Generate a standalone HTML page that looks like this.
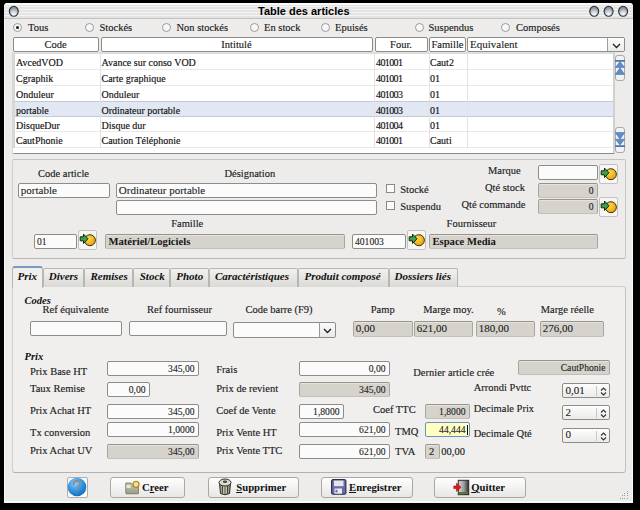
<!DOCTYPE html><html><head><meta charset="utf-8"><style>
*{box-sizing:border-box;margin:0;padding:0}
html,body{width:640px;height:510px;background:#000;overflow:hidden;position:relative;font-family:"Liberation Serif",serif;font-size:10px;color:#1a1a1a}
div,span{position:absolute;white-space:nowrap}
span{line-height:14px}
.m{font-size:10.5px;color:#1c1c24;-webkit-text-stroke:0.15px #1c1c24}
.t{font-size:10px;color:#111;-webkit-text-stroke:0.15px #111}
.b{font-size:10.6px;font-weight:bold;color:#151515}
.bt{font-size:10.7px;font-weight:bold;color:#111}
.it2{font-size:10.5px;font-weight:bold;font-style:italic;color:#111}
.it{font-size:11px;font-weight:bold;font-style:italic;color:#111}
.in{font-size:11px;color:#222;-webkit-text-stroke:0.1px #222}
.hd{font-size:10.5px;color:#222;-webkit-text-stroke:0.15px #222}
#win{left:4px;top:3px;width:629px;height:500px;background:#edecea;border-radius:4px 4px 0 0;border-left:1px solid #fafafa;border-right:1px solid #fafafa;border-bottom:2px solid #f8f8f8}
#tb{left:4px;top:3px;width:629px;height:16px;border-radius:4px 4px 0 0;background:linear-gradient(#fbfbfb 0 2px,transparent 2px),repeating-linear-gradient(#f3f3f3 0 1.5px,#e4e4e4 1.5px 3px);border-bottom:1px solid #c2c2c2}
.wb{top:6px;width:10px;height:11px;border-radius:50%;background:radial-gradient(ellipse at 50% 80%,#ffffff 0,#dfe3ea 35%,#9aa0aa 80%,#50545c 100%);box-shadow:0 0 0 0.6px #3a3e44}
.radio{width:9px;height:9px;border-radius:50%;border:1px solid #9a9a9a;background:#f8f8f8}
.radio.on::after{content:"";position:absolute;left:2px;top:2px;width:3px;height:3px;border-radius:50%;background:#1a1a1a}
.chk{width:9px;height:9px;border:1px solid #8a8a8a;background:#fbfbfb}
.hdr{top:37px;height:15px;background:#fff;border:1px solid #8e8c88;border-radius:2px}
.tbl{left:12px;top:52px;width:603px;height:102px;background:#fff;border-left:3px solid #d8d8d6;border-right:2px solid #d0d0ce;border-top:2px solid #dedede;border-bottom:1px solid #8c8a86}
.row{left:15px;width:598px;border-bottom:1px solid #e9e9e9}
.vl{top:54px;width:1px;height:94px;background:#e2e2e2}
.sb{left:615px;width:10px;height:26px;border:1px solid #a8a8a8;border-radius:3px;background:#f2f2f2}
.grp{border:1px solid #c9c7c3;border-radius:3px}
.inp{height:15px;background:#fbfbfb;border:1px solid #8e8c88;border-radius:2px}
.ro{background:#d6d2cc;border-color:#96928c #a8a49e #c2c0bc #a8a49e;box-shadow:inset 0 1px 0 #e6e3de}
.ib{width:19px;height:20px;border:1px solid #c4c2be;border-radius:2px;background:#f6f6f5}
.tab{top:268px;height:19px;border:1px solid #b8b6b2;border-bottom:none;border-radius:2px 2px 0 0;background:linear-gradient(#f2f1ef,#dcdad7)}
.btn{top:477px;height:21px;border:1px solid #aaa8a4;border-radius:3px;background:linear-gradient(#fefefe,#e8e7e5)}
.spin{height:15px;background:linear-gradient(#fdfdfd,#ecebea);border:1px solid #8e8c88;border-radius:2px}
</style></head><body>
<div id="win"></div><div id="tb"></div>
<span style="left:258px;top:5px;font-family:'Liberation Sans',sans-serif;font-weight:bold;font-size:11px;line-height:12px;color:#000">Table des articles</span>
<svg style="position:absolute;left:0;top:0" width="640" height="24"><defs><radialGradient id="wbg" cx="0.5" cy="0.8" r="0.8" fx="0.5" fy="0.9"><stop offset="0" stop-color="#ffffff"/><stop offset="0.4" stop-color="#d4dae2"/><stop offset="1" stop-color="#6e7580"/></radialGradient></defs><ellipse cx="13.8" cy="11.3" rx="4.5" ry="5.0" fill="url(#wbg)" stroke="#2e3238" stroke-width="1.1"/><ellipse cx="594.2" cy="11.3" rx="4.5" ry="5.0" fill="url(#wbg)" stroke="#2e3238" stroke-width="1.1"/><ellipse cx="608.6" cy="11.3" rx="4.5" ry="5.0" fill="url(#wbg)" stroke="#2e3238" stroke-width="1.1"/><ellipse cx="623.1" cy="11.3" rx="4.5" ry="5.0" fill="url(#wbg)" stroke="#2e3238" stroke-width="1.1"/></svg>
<div class="radio on" style="left:13px;top:23px"></div>
<span class="m" style="left:28px;top:20.96px;">Tous</span>
<div class="radio" style="left:85px;top:23px"></div>
<span class="m" style="left:99.5px;top:20.96px;">Stockés</span>
<div class="radio" style="left:162px;top:23px"></div>
<span class="m" style="left:176.5px;top:20.96px;">Non stockés</span>
<div class="radio" style="left:250px;top:23px"></div>
<span class="m" style="left:264px;top:20.96px;">En stock</span>
<div class="radio" style="left:321px;top:23px"></div>
<span class="m" style="left:335px;top:20.96px;">Epuisés</span>
<div class="radio" style="left:415px;top:23px"></div>
<span class="m" style="left:428.5px;top:20.96px;">Suspendus</span>
<div class="radio" style="left:501px;top:23px"></div>
<span class="m" style="left:516px;top:20.96px;">Composés</span>
<div class="hdr" style="left:12.5px;width:86px"></div>
<span class="hd" style="left:12.5px;width:86px;top:37.5px;text-align:center">Code</span>
<div class="hdr" style="left:100.5px;width:272px"></div>
<span class="hd" style="left:100.5px;width:272px;top:37.5px;text-align:center">Intitulé</span>
<div class="hdr" style="left:374.5px;width:53px"></div>
<span class="hd" style="left:374.5px;width:53px;top:37.5px;text-align:center">Four.</span>
<div class="hdr" style="left:429px;width:37px"></div>
<span class="hd" style="left:429px;width:37px;top:37.5px;text-align:center">Famille</span>
<div class="hdr" style="left:467px;width:158px"><div style="left:139px;top:0;width:17px;height:13px;background:linear-gradient(#fdfdfd,#ebebea);border-left:1px solid #a09e9a;border-radius:0 2px 2px 0"></div><svg style="position:absolute;left:144px;top:4.5px" width="9" height="6"><path d="M1 1 L4.5 4.5 L8 1" stroke="#222" stroke-width="1.3" fill="none"/></svg></div>
<span class="in" style="left:470px;top:37.09px;">Equivalent</span>
<div class="tbl"></div>
<div class="row" style="top:54px;height:16px;"></div>
<span class="t" style="left:16px;top:56.22px;">AvcedVOD</span>
<span class="t" style="left:101.5px;top:56.22px;">Avance sur conso VOD</span>
<span class="t" style="left:376px;top:56.22px;letter-spacing:-0.6px">401001</span>
<span class="t" style="left:430px;top:56.22px;">Caut2</span>
<div class="row" style="top:70px;height:16px;"></div>
<span class="t" style="left:16px;top:72.22px;">Cgraphik</span>
<span class="t" style="left:101.5px;top:72.22px;">Carte graphique</span>
<span class="t" style="left:376px;top:72.22px;letter-spacing:-0.6px">401001</span>
<span class="t" style="left:430px;top:72.22px;">01</span>
<div class="row" style="top:86px;height:16px;border-bottom-color:#c4c9d2;"></div>
<span class="t" style="left:16px;top:88.22px;">Onduleur</span>
<span class="t" style="left:101.5px;top:88.22px;">Onduleur</span>
<span class="t" style="left:376px;top:88.22px;letter-spacing:-0.6px">401003</span>
<span class="t" style="left:430px;top:88.22px;">01</span>
<div class="row" style="top:102px;height:15px;background:#e1e8f4;border-bottom-color:#c4c9d2;"></div>
<span class="t" style="left:16px;top:104.22px;">portable</span>
<span class="t" style="left:101.5px;top:104.22px;">Ordinateur portable</span>
<span class="t" style="left:376px;top:104.22px;letter-spacing:-0.6px">401003</span>
<span class="t" style="left:430px;top:104.22px;">01</span>
<div class="row" style="top:117px;height:15px;"></div>
<span class="t" style="left:16px;top:119.23px;">DisqueDur</span>
<span class="t" style="left:101.5px;top:119.23px;">Disque dur</span>
<span class="t" style="left:376px;top:119.23px;letter-spacing:-0.6px">401004</span>
<span class="t" style="left:430px;top:119.23px;">01</span>
<div class="row" style="top:132px;height:16px;"></div>
<span class="t" style="left:16px;top:134.23px;">CautPhonie</span>
<span class="t" style="left:101.5px;top:134.23px;">Caution Téléphonie</span>
<span class="t" style="left:376px;top:134.23px;letter-spacing:-0.6px">401001</span>
<span class="t" style="left:430px;top:134.23px;">Cauti</span>
<div class="vl" style="left:100px"></div>
<div class="vl" style="left:374px"></div>
<div class="vl" style="left:429px"></div>
<div class="vl" style="left:467px"></div>
<div class="sb" style="top:54.5px"><svg style="position:absolute;left:-1px;top:3.5px" width="10" height="17"><rect x="0" y="1" width="10" height="1.8" fill="#4a78b8"/><path d="M0.3 8.5 L5 2.6 L9.7 8.5 Z M0.3 15.5 L5 8.8 L9.7 15.5 Z" fill="#5e8ccc" stroke="#3a68a8" stroke-width="0.5"/></svg></div>
<div class="sb" style="top:126.5px"><svg style="position:absolute;left:-1px;top:3.5px" width="10" height="17"><path d="M0.3 1.5 L5 8.2 L9.7 1.5 Z M0.3 8.2 L5 14 L9.7 8.2 Z" fill="#5e8ccc" stroke="#3a68a8" stroke-width="0.5"/><rect x="0" y="14.2" width="10" height="1.8" fill="#4a78b8"/></svg></div>
<div class="grp" style="left:11.5px;top:159px;width:614.5px;height:100px;border-radius:2px;border-color:#c6c4c0 #c8c6c2 #b8b6b2 #d0cecb"></div>
<div style="left:13px;top:148px;width:3px;height:5px;background:#fff"></div>
<span class="m" style="left:38px;top:167.06px;">Code article</span>
<div class="inp" style="left:18px;top:183px;width:92px;height:15px;"></div>
<span class="in" style="left:20.8px;top:183.29px;">portable</span>
<span class="m" style="left:224.4px;top:167.06px;">Désignation</span>
<div class="inp" style="left:116px;top:183px;width:261px;height:15px;"></div>
<span class="in" style="left:118.8px;top:183.29px;">Ordinateur portable</span>
<div class="inp" style="left:116px;top:200px;width:261px;height:15px;"></div>
<span class="m" style="left:171.2px;top:216.56px;">Famille</span>
<div class="inp" style="left:34px;top:234px;width:43px;height:15px;"></div>
<span class="in" style="left:37px;font-size:9.6px;top:235.36px">01</span>
<div class="ib" style="left:78px;top:230px"><svg style="position:absolute;left:-1px;top:0px" width="18" height="17"><defs><radialGradient id="og" cx="0.4" cy="0.35" r="0.75"><stop offset="0" stop-color="#ffd84a"/><stop offset="1" stop-color="#e89a00"/></radialGradient></defs><circle cx="11.9" cy="9.2" r="5.5" fill="url(#og)" stroke="#2a2000" stroke-width="0.9"/><path d="M2.2 5.8 H5.5 V3.1 L10 7.8 L5.5 12.5 V9.8 H2.2 Z" fill="#3ea04a" stroke="#0e2a10" stroke-width="1"/></svg></div>
<div class="inp ro" style="left:105px;top:234px;width:240px;height:15px;"></div>
<span class="b" style="left:108.5px;top:234.82px;">Matériel/Logiciels</span>
<div class="chk" style="left:386px;top:184px"></div>
<span class="m" style="left:400.2px;top:182.76px;">Stocké</span>
<div class="chk" style="left:386px;top:201px"></div>
<span class="m" style="left:400.2px;top:199.76px;">Suspendu</span>
<span class="m" style="left:488px;top:164.26px;">Marque</span>
<span class="m" style="left:485px;top:180.76px;">Qté stock</span>
<span class="m" style="left:461.5px;top:197.56px;">Qté commande</span>
<div class="inp" style="left:538px;top:165px;width:60px;height:15px;"></div>
<div class="ib" style="left:599px;top:164px"><svg style="position:absolute;left:-1px;top:0px" width="18" height="17"><defs><radialGradient id="og" cx="0.4" cy="0.35" r="0.75"><stop offset="0" stop-color="#ffd84a"/><stop offset="1" stop-color="#e89a00"/></radialGradient></defs><circle cx="11.9" cy="9.2" r="5.5" fill="url(#og)" stroke="#2a2000" stroke-width="0.9"/><path d="M2.2 5.8 H5.5 V3.1 L10 7.8 L5.5 12.5 V9.8 H2.2 Z" fill="#3ea04a" stroke="#0e2a10" stroke-width="1"/></svg></div>
<div class="inp ro" style="left:538px;top:183px;width:60px;height:15px;"></div>
<span class="in" style="left:538px;width:55.5px;text-align:right;font-size:9.6px;top:184.36px">0</span>
<div class="inp ro" style="left:538px;top:199px;width:60px;height:15px;"></div>
<span class="in" style="left:538px;width:55.5px;text-align:right;font-size:9.6px;top:200.36px">0</span>
<div class="ib" style="left:599px;top:197px"><svg style="position:absolute;left:-1px;top:0px" width="18" height="17"><defs><radialGradient id="og" cx="0.4" cy="0.35" r="0.75"><stop offset="0" stop-color="#ffd84a"/><stop offset="1" stop-color="#e89a00"/></radialGradient></defs><circle cx="11.9" cy="9.2" r="5.5" fill="url(#og)" stroke="#2a2000" stroke-width="0.9"/><path d="M2.2 5.8 H5.5 V3.1 L10 7.8 L5.5 12.5 V9.8 H2.2 Z" fill="#3ea04a" stroke="#0e2a10" stroke-width="1"/></svg></div>
<span class="m" style="left:446.6px;top:216.56px;">Fournisseur</span>
<div class="inp" style="left:352px;top:234px;width:54px;height:15px;"></div>
<span class="in" style="left:355px;font-size:9.6px;top:235.36px">401003</span>
<div class="ib" style="left:407px;top:230px"><svg style="position:absolute;left:-1px;top:0px" width="18" height="17"><defs><radialGradient id="og" cx="0.4" cy="0.35" r="0.75"><stop offset="0" stop-color="#ffd84a"/><stop offset="1" stop-color="#e89a00"/></radialGradient></defs><circle cx="11.9" cy="9.2" r="5.5" fill="url(#og)" stroke="#2a2000" stroke-width="0.9"/><path d="M2.2 5.8 H5.5 V3.1 L10 7.8 L5.5 12.5 V9.8 H2.2 Z" fill="#3ea04a" stroke="#0e2a10" stroke-width="1"/></svg></div>
<div class="inp ro" style="left:429px;top:234px;width:169px;height:15px;"></div>
<span class="b" style="left:432.5px;top:234.82px;">Espace Media</span>
<div class="grp" style="left:11.5px;top:286px;width:614.5px;height:187px;border-radius:0 3px 3px 3px;background:#f0efed;border-color:#cfcdc9 #c4c2be #b4b2ae #d2d0cc"></div>
<div class="tab" style="left:12px;width:30.5px;top:265.5px;height:22px;background:#f0efed;border-top:2px solid #7898c8;border-color:#7898c8 #b8b6b2 transparent #b8b6b2;border-radius:3px 3px 0 0"></div>
<span class="it" style="left:17.5px;top:269.09px;">Prix</span>
<div class="tab" style="left:42.5px;width:41.75px"></div>
<span class="it" style="left:48.75px;top:269.09px;">Divers</span>
<div class="tab" style="left:84.25px;width:48.75px"></div>
<span class="it" style="left:90.5px;top:269.09px;">Remises</span>
<div class="tab" style="left:133px;width:37px"></div>
<span class="it" style="left:139.75px;top:269.09px;">Stock</span>
<div class="tab" style="left:170px;width:38.75px"></div>
<span class="it" style="left:176.25px;top:269.09px;">Photo</span>
<div class="tab" style="left:208.75px;width:89.5px"></div>
<span class="it" style="left:215px;top:269.09px;">Caractéristiques</span>
<div class="tab" style="left:298.25px;width:90.5px"></div>
<span class="it" style="left:304.5px;top:269.09px;">Produit composé</span>
<div class="tab" style="left:388.75px;width:69.25px"></div>
<span class="it" style="left:394.5px;top:269.09px;">Dossiers liés</span>
<span class="it2" style="left:24.5px;top:294.01px;">Codes</span>
<span class="m" style="left:42.5px;top:303.26px;">Ref équivalente</span>
<span class="m" style="left:147px;top:303.26px;">Ref fournisseur</span>
<span class="m" style="left:245.5px;top:303.26px;">Code barre (F9)</span>
<span class="m" style="left:370.75px;top:303.26px;">Pamp</span>
<span class="m" style="left:423.25px;top:303.26px;">Marge moy.</span>
<span class="m" style="left:497px;top:304.76px;">%</span>
<span class="m" style="left:540.75px;top:303.26px;">Marge réelle</span>
<div class="inp" style="left:30px;top:321px;width:92px;height:15px;"></div>
<div class="inp" style="left:129px;top:321px;width:98px;height:15px;"></div>
<div class="inp" style="left:233px;top:321.5px;width:103px;height:16px"><div style="left:85px;top:-1px;width:1px;height:16px;background:#9a9894"></div><div style="left:86px;top:0;width:15px;height:14px;background:linear-gradient(#fafafa,#e8e8e8);border-radius:0 2px 2px 0"></div><svg style="position:absolute;left:89px;top:5px" width="9" height="6"><path d="M1 1 L4.5 4.5 L8 1" stroke="#222" stroke-width="1.4" fill="none"/></svg></div>
<div class="inp ro" style="left:353px;top:321px;width:60px;height:16px;"></div>
<span class="in" style="left:355.8px;top:321.29px;">0,00</span>
<div class="inp ro" style="left:414px;top:321px;width:59px;height:16px;"></div>
<span class="in" style="left:416.8px;top:321.29px;">621,00</span>
<div class="inp ro" style="left:476px;top:321px;width:59px;height:16px;"></div>
<span class="in" style="left:478.8px;top:321.29px;">180,00</span>
<div class="inp ro" style="left:540px;top:321px;width:64px;height:16px;"></div>
<span class="in" style="left:542.8px;top:321.29px;">276,00</span>
<span class="it2" style="left:24.5px;top:350.26px;">Prix</span>
<span class="m" style="left:30px;top:364.76px;">Prix Base HT</span>
<span class="m" style="left:30px;top:382.01px;">Taux Remise</span>
<span class="m" style="left:30px;top:404.01px;">Prix Achat HT</span>
<span class="m" style="left:30px;top:425.76px;">Tx conversion</span>
<span class="m" style="left:30px;top:443.51px;">Prix Achat UV</span>
<div class="inp" style="left:107px;top:361px;width:92px;height:15px;"></div>
<span class="in" style="left:107px;width:87.5px;text-align:right;font-size:9.6px;top:362.36px">345,00</span>
<div class="inp" style="left:107px;top:382px;width:43px;height:15px;"></div>
<span class="in" style="left:107px;width:38.5px;text-align:right;font-size:9.6px;top:383.36px">0,00</span>
<div class="inp" style="left:107px;top:404px;width:92px;height:15px;"></div>
<span class="in" style="left:107px;width:87.5px;text-align:right;font-size:9.6px;top:405.36px">345,00</span>
<div class="inp" style="left:107px;top:422px;width:92px;height:15px;"></div>
<span class="in" style="left:107px;width:87.5px;text-align:right;font-size:9.6px;top:423.36px">1,0000</span>
<div class="inp ro" style="left:107px;top:444px;width:92px;height:15px;"></div>
<span class="in" style="left:107px;width:87.5px;text-align:right;font-size:9.6px;top:445.36px">345,00</span>
<span class="m" style="left:216.25px;top:363.26px;">Frais</span>
<span class="m" style="left:216.25px;top:381.51px;">Prix de revient</span>
<span class="m" style="left:216.25px;top:403.51px;">Coef de Vente</span>
<span class="m" style="left:216.25px;top:425.76px;">Prix Vente HT</span>
<span class="m" style="left:216.25px;top:443.51px;">Prix Vente TTC</span>
<div class="inp" style="left:299px;top:361px;width:91px;height:15px;"></div>
<span class="in" style="left:299px;width:86.5px;text-align:right;font-size:9.6px;top:362.36px">0,00</span>
<div class="inp ro" style="left:299px;top:382px;width:91px;height:15px;"></div>
<span class="in" style="left:299px;width:86.5px;text-align:right;font-size:9.6px;top:383.36px">345,00</span>
<div class="inp" style="left:299px;top:404px;width:45px;height:15px;"></div>
<span class="in" style="left:299px;width:40.5px;text-align:right;font-size:9.6px;top:405.36px">1,8000</span>
<div class="inp" style="left:299px;top:422px;width:91px;height:15px;"></div>
<span class="in" style="left:299px;width:86.5px;text-align:right;font-size:9.6px;top:423.36px">621,00</span>
<div class="inp" style="left:299px;top:444px;width:91px;height:15px;"></div>
<span class="in" style="left:299px;width:86.5px;text-align:right;font-size:9.6px;top:445.36px">621,00</span>
<span class="m" style="left:373px;top:403.26px;">Coef TTC</span>
<span class="m" style="left:395px;top:424.76px;">TMQ</span>
<span class="m" style="left:395px;top:444.76px;">TVA</span>
<div class="inp ro" style="left:425px;top:404px;width:45px;height:15px;"></div>
<span class="in" style="left:425px;width:40.5px;text-align:right;font-size:9.6px;top:405.36px">1,8000</span>
<div class="inp" style="left:425px;top:422px;width:45px;height:15px;background:#ffffc4;border-color:#6f8fbf"></div>
<span class="in" style="left:425px;width:40.5px;text-align:right;font-size:9.6px;top:423.36px">44,444</span>
<div style="left:467px;top:425px;width:1px;height:10px;background:#000"></div>
<div class="inp ro" style="left:425px;top:444px;width:15px;height:15px;"></div>
<span class="m" style="left:429px;top:445.26px;">2</span>
<span class="m" style="left:441.25px;top:444.76px;">00,00</span>
<span class="m" style="left:413.25px;top:366.01px;">Dernier article crée</span>
<div class="inp ro" style="left:518px;top:360px;width:92px;height:15px;"></div>
<span class="in" style="left:518px;width:87.5px;text-align:right;font-size:9.6px;top:361.36px">CautPhonie</span>
<span class="m" style="left:473.75px;top:381.01px;">Arrondi Pvttc</span>
<span class="m" style="left:473.75px;top:402.26px;">Decimale Prix</span>
<span class="m" style="left:473.75px;top:427.26px;">Decimale Qté</span>
<div class="spin" style="left:562px;top:383.25px;width:47.5px"><div style="left:33px;top:2px;width:1px;height:10px;background:#c8c8c8"></div><svg style="position:absolute;left:37px;top:2px" width="7" height="11"><path d="M1 4.5 L3.5 2 L6 4.5 M1 6.5 L3.5 9 L6 6.5" stroke="#333" stroke-width="1.1" fill="none"/></svg></div>
<span class="in" style="left:565.5px;top:383.24px;">0,01</span>
<div class="spin" style="left:562px;top:405px;width:47.5px"><div style="left:33px;top:2px;width:1px;height:10px;background:#c8c8c8"></div><svg style="position:absolute;left:37px;top:2px" width="7" height="11"><path d="M1 4.5 L3.5 2 L6 4.5 M1 6.5 L3.5 9 L6 6.5" stroke="#333" stroke-width="1.1" fill="none"/></svg></div>
<span class="in" style="left:565.5px;top:404.99px;">2</span>
<div class="spin" style="left:562px;top:427.5px;width:47.5px"><div style="left:33px;top:2px;width:1px;height:10px;background:#c8c8c8"></div><svg style="position:absolute;left:37px;top:2px" width="7" height="11"><path d="M1 4.5 L3.5 2 L6 4.5 M1 6.5 L3.5 9 L6 6.5" stroke="#333" stroke-width="1.1" fill="none"/></svg></div>
<span class="in" style="left:565.5px;top:427.49px;">0</span>
<div class="ib" style="left:67px;top:477px;width:21px;height:21px;border-color:#b0aeaa;background:#fafafa"></div>
<svg style="position:absolute;left:67px;top:477px" width="21" height="21"><defs><radialGradient id="hg" cx="0.4" cy="0.3" r="0.75"><stop offset="0" stop-color="#8ed0fa"/><stop offset="0.55" stop-color="#2f94e0"/><stop offset="1" stop-color="#0f68c0"/></radialGradient></defs><circle cx="10" cy="10" r="9.3" fill="url(#hg)"/><path d="M6.6 7.2 Q6.6 3.8 10.2 3.8 Q13.6 3.8 13.6 6.8 Q13.6 8.6 11.4 9.8 Q10.2 10.5 10.2 12.6" fill="none" stroke="#8c8c8c" stroke-width="1.8" stroke-linecap="round"/><circle cx="10.2" cy="15.6" r="1.1" fill="#7a7a7a"/></svg>
<div class="btn" style="left:109.5px;width:75px"></div>
<svg style="position:absolute;left:125px;top:480px" width="16" height="15"><defs><linearGradient id="fg" x1="0" y1="0" x2="0" y2="1"><stop offset="0" stop-color="#c4c6b0"/><stop offset="1" stop-color="#9a9c84"/></linearGradient></defs><path d="M0.8 3 H6 L7 4.5 H13.5 V13.2 Q13.5 13.8 12.8 13.8 H1.5 Q0.8 13.8 0.8 13 Z" fill="url(#fg)" stroke="#6c6e5a" stroke-width="0.8"/><rect x="1.5" y="5" width="4" height="3" fill="#e8e8e0"/><circle cx="11" cy="4.3" r="3" fill="#e8e0c0" stroke="#c08a10" stroke-width="1.3"/></svg>
<span class="bt" style="left:142px;top:480.19px;">C<u>r</u>eer</span>
<div class="btn" style="left:207.5px;width:91px"></div>
<svg style="position:absolute;left:218px;top:478px" width="15" height="18"><defs><linearGradient id="tg" x1="0" y1="0" x2="1" y2="0"><stop offset="0" stop-color="#8a8a78"/><stop offset="0.5" stop-color="#d8d8c8"/><stop offset="1" stop-color="#7a7a68"/></linearGradient></defs><path d="M1.5 5 L2.5 15.5 Q7 18 11.5 15.5 L12.5 5 Z" fill="url(#tg)" stroke="#2a2a22" stroke-width="1"/><path d="M4.5 8 V15.5 M7 8.5 V16.2 M9.5 8 V15.5" stroke="#3a3a30" stroke-width="0.9"/><ellipse cx="7" cy="4.5" rx="6" ry="3.5" fill="#dcdccc" stroke="#2a2a22" stroke-width="1"/><ellipse cx="7" cy="3.8" rx="2.2" ry="1.2" fill="#4a4a40"/></svg>
<span class="bt" style="left:236.25px;top:480.19px;"><u>S</u>upprimer</span>
<div class="btn" style="left:321.25px;width:91.25px"></div>
<svg style="position:absolute;left:331px;top:479px" width="16" height="16"><rect x="0.6" y="0.6" width="14.3" height="14.6" rx="1.2" fill="#6a6aae" stroke="#1e1e3a" stroke-width="1"/><rect x="3" y="1.6" width="9.5" height="5.6" fill="#e6e6ea"/><rect x="3.5" y="9.5" width="7.5" height="5.2" fill="#ececf2"/><rect x="4.5" y="10.8" width="2" height="2.6" fill="#6a6aae"/></svg>
<span class="bt" style="left:349px;top:480.19px;"><u>E</u>nregistrer</span>
<div class="btn" style="left:434px;width:92px"></div>
<svg style="position:absolute;left:453px;top:479px" width="17" height="17"><defs><linearGradient id="dg" x1="0" y1="0" x2="1" y2="0"><stop offset="0" stop-color="#d8d8d8"/><stop offset="0.55" stop-color="#9a9a9a"/><stop offset="1" stop-color="#303030"/></linearGradient></defs><rect x="5.3" y="1.3" width="10.4" height="14.4" fill="url(#dg)" stroke="#2a2a2a" stroke-width="1"/><rect x="6" y="13" width="9" height="2" fill="#5a7a2a"/><path d="M0.8 7 H3.5 V4.2 L8 8.3 L3.5 12.4 V9.6 H0.8 Z" fill="#e01818" stroke="#901010" stroke-width="0.6"/></svg>
<span class="bt" style="left:471.25px;top:480.19px;"><u>Q</u>uitter</span>
<div style="left:626.6px;top:491.0px;width:1px;height:1px;background:#999"></div>
<div style="left:624.4px;top:493.2px;width:1px;height:1px;background:#999"></div>
<div style="left:626.6px;top:493.2px;width:1px;height:1px;background:#999"></div>
<div style="left:622.2px;top:495.4px;width:1px;height:1px;background:#999"></div>
<div style="left:624.4px;top:495.4px;width:1px;height:1px;background:#999"></div>
<div style="left:626.6px;top:495.4px;width:1px;height:1px;background:#999"></div>
<div style="left:620.0px;top:497.6px;width:1px;height:1px;background:#999"></div>
<div style="left:622.2px;top:497.6px;width:1px;height:1px;background:#999"></div>
<div style="left:624.4px;top:497.6px;width:1px;height:1px;background:#999"></div>
<div style="left:626.6px;top:497.6px;width:1px;height:1px;background:#999"></div>
</body></html>
